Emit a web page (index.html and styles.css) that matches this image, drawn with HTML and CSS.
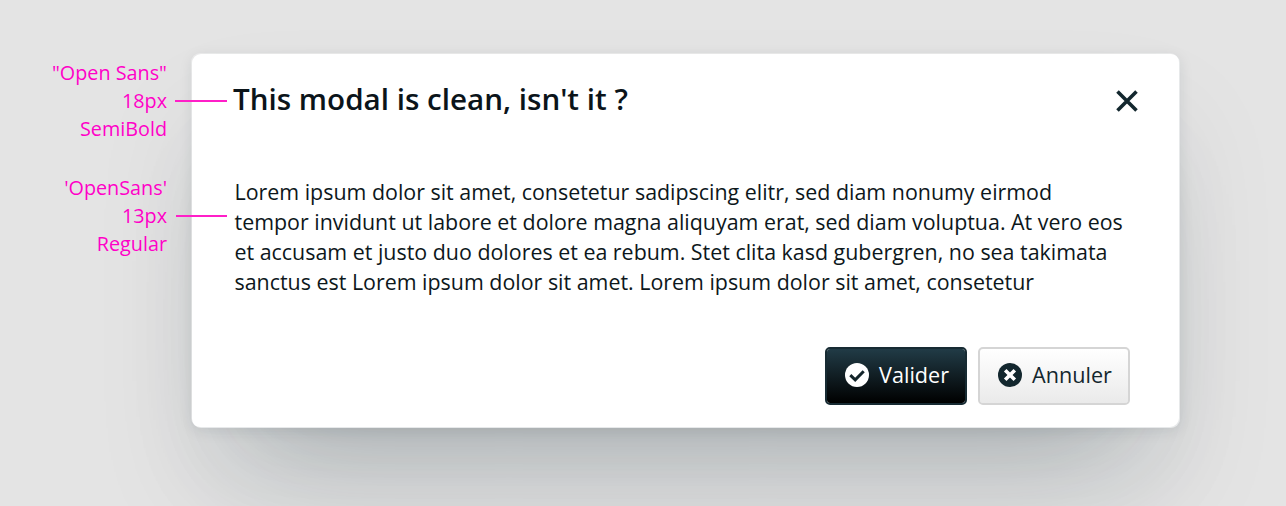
FILE: index.html
```html
<!DOCTYPE html>
<html lang="en">
<head>
<meta charset="utf-8">
<title>Modal</title>
<link rel="stylesheet" href="styles.css">
</head>
<body>
<main class="stage">
  <aside class="notes">
    <div class="note">
      <p class="note-text">"Open Sans"<br>18px<br>SemiBold</p>
      <span class="note-line"></span>
    </div>
    <div class="note note-body">
      <p class="note-text">'OpenSans'<br>13px<br>Regular</p>
      <span class="note-line"></span>
    </div>
  </aside>
  <section class="modal">
    <header class="modal-header">
      <h1 class="modal-title">This modal is clean, isn't it ?</h1>
      <svg class="close" width="22" height="22" viewBox="0 0 22 22"><path d="M1.5 1.5 20.5 20.5M20.5 1.5 1.5 20.5"/></svg>
    </header>
    <p class="modal-text">Lorem ipsum dolor sit amet, consetetur sadipscing elitr, sed diam nonumy eirmod<br>tempor invidunt ut labore et dolore magna aliquyam erat, sed diam voluptua. At vero eos<br>et accusam et justo duo dolores et ea rebum. Stet clita kasd gubergren, no sea takimata<br>sanctus est Lorem ipsum dolor sit amet. Lorem ipsum dolor sit amet, consetetur</p>
    <footer class="modal-actions">
      <button class="button button-primary">
        <svg class="icon" viewBox="0 0 24 24"><circle cx="12" cy="12" r="12" fill="#fff"/><path d="M5.3 12.1 10.2 16.8 18.7 8.2" fill="none" stroke="#13242a" stroke-width="3"/></svg>
        <span>Valider</span>
      </button>
      <button class="button button-secondary">
        <svg class="icon" viewBox="0 0 24 24"><circle cx="12" cy="12" r="12" fill="#13272e"/><path d="M7.2 7.2 16.8 16.8M16.8 7.2 7.2 16.8" fill="none" stroke="#fff" stroke-width="3.6"/></svg>
        <span>Annuler</span>
      </button>
    </footer>
  </section>
</main>
</body>
</html>
```

FILE: styles.css
```css
* { box-sizing: border-box; }

body {
  margin: 0;
  background: #e4e4e4;
  font-family: "Open Sans", sans-serif;
}

.stage {
  display: flex;
  align-items: flex-start;
  height: 506px;
  overflow: hidden;
}

.notes {
  position: relative;
  z-index: 1;
  width: 227px;
  margin-right: -35px;
  padding-top: 59px;
}

.note {
  display: flex;
  align-items: center;
  justify-content: flex-end;
  gap: 8px;
}

.note-body { margin-top: 31px; }

.note-text {
  margin: 0;
  color: #ff00c8;
  font-size: 19.8px;
  line-height: 28px;
  text-align: right;
}

.note-line {
  width: 52px;
  height: 2px;
  background: #ff1fc8;
}

.note-body .note-line {
  width: 51px;
  margin-left: 1px;
}

.modal {
  width: 988px;
  height: 374px;
  margin-top: 54px;
  padding: 24px 50px 0 41px;
  border-radius: 9px;
  background: #fff;
  box-shadow:
    inset -1px -1px 0 rgba(19, 39, 46, .1),
    -1px -1px 0 rgba(255, 255, 255, .35),
    0 3px 14px rgba(19, 39, 46, .1),
    0 80px 120px -60px rgba(19, 39, 46, .24),
    0 64px 110px rgba(19, 39, 46, .08);
}

.modal-header {
  display: flex;
  align-items: center;
  justify-content: space-between;
  height: 42px;
  margin-right: -8px;
}

.modal-title {
  margin: 0;
  color: #0b141a;
  font-size: 29.6px;
  font-weight: 600;
  line-height: 42px;
}

.close {
  margin-top: 4px;
  fill: none;
  stroke: #13272e;
  stroke-width: 3.6;
}

.modal-text {
  margin: 57.3px 0 0 1.5px;
  color: #0d171b;
  font-size: 21.42px;
  line-height: 29.75px;
  white-space: nowrap;
}

.modal-actions {
  display: flex;
  justify-content: flex-end;
  gap: 11px;
  margin-top: 50.5px;
}

.button {
  display: flex;
  align-items: center;
  gap: 10.5px;
  height: 58px;
  padding: 0 16px 2px 17.6px;
  border: 2px solid;
  border-radius: 5px;
  font: 21.6px "Open Sans", sans-serif;
}

.button-primary {
  width: 142px;
  border-color: #172b33;
  background: linear-gradient(#213b46, #000) padding-box;
  color: #fff;
}

.button-secondary {
  width: 152px;
  border-color: #d5d5d5;
  background: linear-gradient(#fff, #eaeaea) padding-box;
  color: #13272e;
}

.icon {
  flex: none;
  width: 24px;
  height: 24px;
}
```
